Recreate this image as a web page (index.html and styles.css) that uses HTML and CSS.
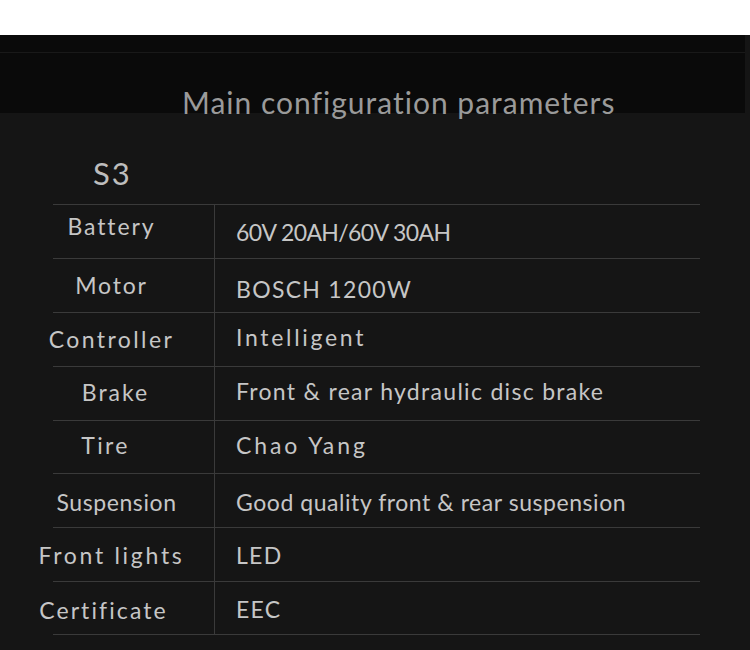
FILE: index.html
```html
<!DOCTYPE html>
<html lang="en">
<head>
<meta charset="utf-8">
<title>Main configuration parameters</title>
<link rel="stylesheet" href="styles.css">
</head>
<body>
<div class="top-white"></div>
<main class="sheet">
  <header class="band">
    <div class="band-strip"></div>
    <h1 class="title">Main configuration parameters</h1>
  </header>
  <h2 class="model">S3</h2>
  <section class="specs">
    <div class="row"><div class="label">Battery</div><div class="value">60V 20AH/60V 30AH</div></div>
    <div class="row"><div class="label">Motor</div><div class="value">BOSCH 1200W</div></div>
    <div class="row"><div class="label">Controller</div><div class="value">Intelligent</div></div>
    <div class="row"><div class="label">Brake</div><div class="value">Front &amp; rear hydraulic disc brake</div></div>
    <div class="row short"><div class="label">Tire</div><div class="value">Chao Yang</div></div>
    <div class="row"><div class="label">Suspension</div><div class="value">Good quality front &amp; rear suspension</div></div>
    <div class="row"><div class="label">Front lights</div><div class="value">LED</div></div>
    <div class="row short"><div class="label">Certificate</div><div class="value">EEC</div></div>
  </section>
</main>
</body>
</html>
```

FILE: styles.css
```css
html, body {
  margin: 0;
  padding: 0;
  background: #ffffff;
}
body {
  font-family: "Lato", "Open Sans", sans-serif;
}
.top-white {
  height: 35px;
  background: #ffffff;
}
.sheet {
  background: #151515;
  height: 615px;
  overflow: hidden;
}
.band {
  width: 745px;
  height: 78px;
  background: #0a0a0a;
}
.band-strip {
  height: 18px;
  border-bottom: 1px solid #191919;
  box-sizing: border-box;
}
.title {
  margin: 0;
  padding: 29px 0 0 182px;
  font-size: 30px;
  line-height: 40px;
  height: 60px;
  box-sizing: border-box;
  font-weight: 400;
  letter-spacing: 1px;
  color: #9a9a9a;
  white-space: nowrap;
}
.model {
  margin: 0;
  padding: 40px 0 0 93px;
  height: 91px;
  box-sizing: border-box;
  font-size: 31px;
  line-height: 40px;
  font-weight: 400;
  letter-spacing: 2px;
  color: #bdbdbd;
}
.specs {
  margin-left: 53px;
  width: 647px;
  border-bottom: 1px solid #3a3a3a;
}
.row {
  display: grid;
  grid-template-columns: 161px 1fr;
  height: 54px;
  box-sizing: border-box;
  border-top: 1px solid #3a3a3a;
  --lt: 10px;
  --vt: 10px;
  --ls: 1.8px;
  --vs: 1.3px;
  --pl: 0px;
  --pr: 44px;
}
.row.short {
  height: 53px;
}
.label,
.value {
  font-size: 23px;
  line-height: 30px;
  color: #c6c6c6;
  white-space: nowrap;
}
.label {
  display: flex;
  justify-content: center;
  align-items: flex-start;
  padding-left: var(--pl);
  padding-right: var(--pr);
  padding-top: var(--lt);
  letter-spacing: var(--ls);
}
.value {
  border-left: 1px solid #3a3a3a;
  padding-left: 21px;
  padding-top: var(--vt);
  letter-spacing: var(--vs);
}
.row:nth-child(1) { --lt: 6px;  --vt: 12px; --ls: 1.9px; --vs: -0.6px; }
.row:nth-child(2) { --lt: 11px; --vt: 15px; --ls: 1.8px; --vs: 1.3px; }
.row:nth-child(3) { --lt: 11px; --vt: 9px;  --ls: 2.4px; --vs: 2.7px; }
.row:nth-child(4) { --lt: 10px; --vt: 9px;  --ls: 2px;   --vs: 1.3px; --pl: 8px; }
.row:nth-child(5) { --lt: 9px;  --vt: 9px;  --ls: 2.3px; --vs: 2.9px; --pr: 56px; }
.row:nth-child(6) { --lt: 13px; --vt: 13px; --ls: 0.6px; --vs: 0.55px; --pl: 10px; }
.row:nth-child(7) { --lt: 12px; --vt: 12px; --ls: 2.7px; --vs: 1.3px; }
.row:nth-child(8) { --lt: 13px; --vt: 12px; --ls: 2.1px; --vs: 1.3px; --pr: 60px; }
```
